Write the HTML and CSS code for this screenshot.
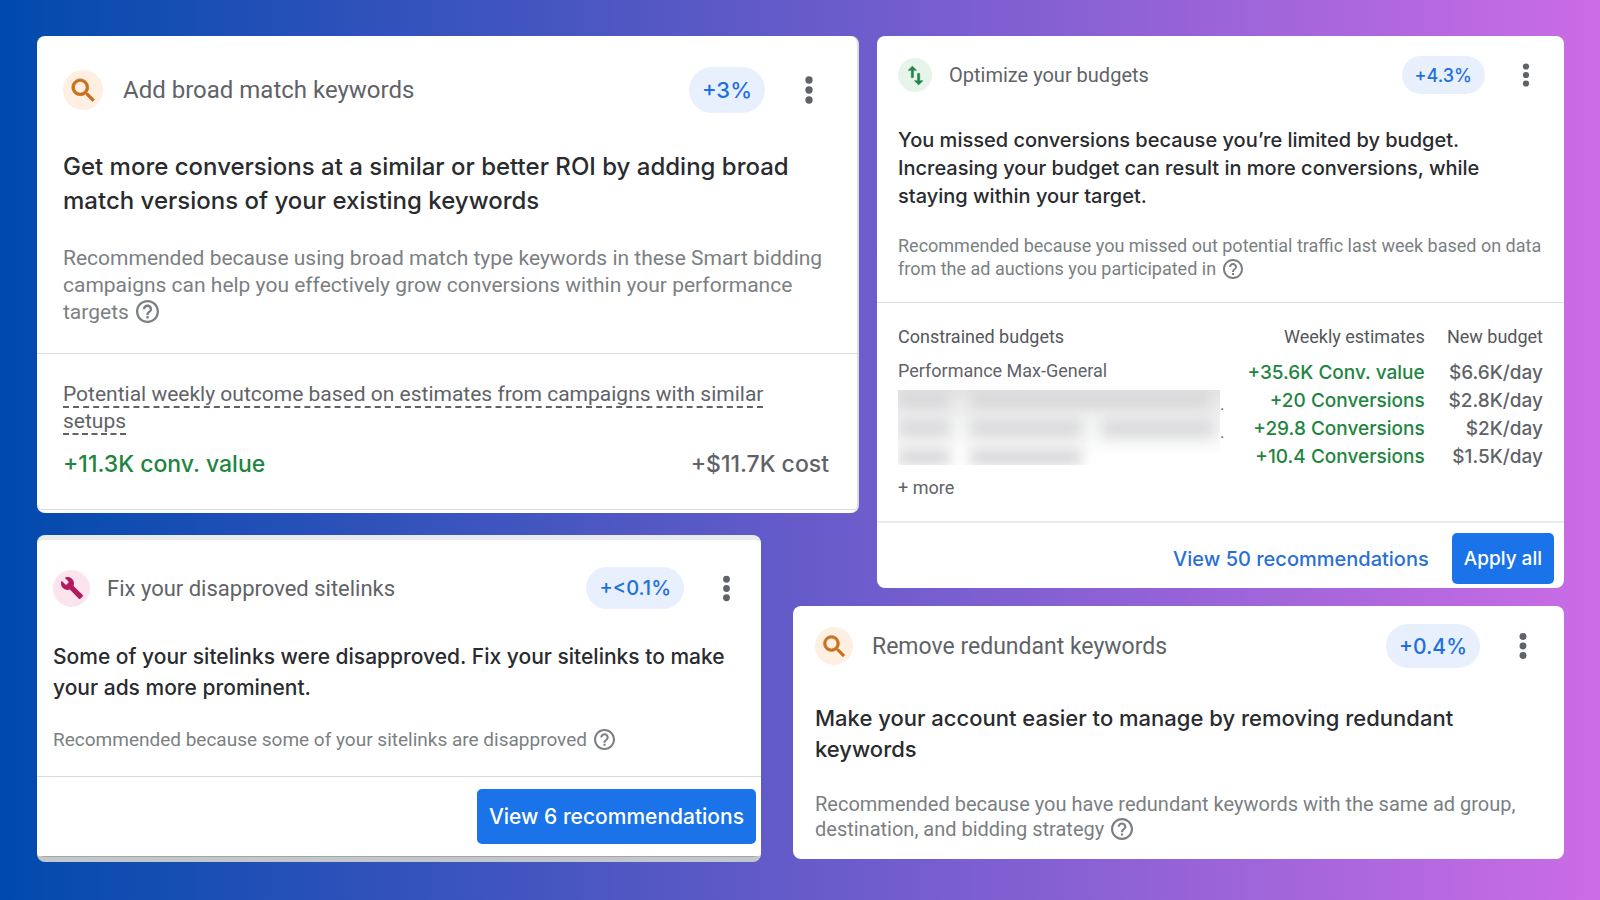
FILE: index.html
```html
<!DOCTYPE html>
<html lang="en">
<head>
    <meta charset="UTF-8">
    <meta name="viewport" content="width=device-width, initial-scale=1.0">
    <title>Recommendations</title>
    <link rel="stylesheet" href="styles.css">
</head>
<body>
    <svg class="sprite" aria-hidden="true">
        <symbol id="icon-search" viewBox="0 0 24 24"><path d="M15.5 14h-.79l-.28-.27C15.41 12.59 16 11.11 16 9.5 16 5.91 13.09 3 9.5 3S3 5.91 3 9.5 5.91 16 9.5 16c1.61 0 3.09-.59 4.23-1.57l.27.28v.79l5 4.99L20.49 19l-4.99-5zm-6 0C7.01 14 5 11.99 5 9.5S7.01 5 9.5 5 14 7.01 14 9.5 11.99 14 9.5 14z"/></symbol>
        <symbol id="icon-wrench" viewBox="0 0 24 24"><path d="M22.7 19l-9.1-9.1c.9-2.3.4-5-1.5-6.9-2-2-5-2.4-7.4-1.3L9 6 6 9 1.6 4.7C.4 7.1.9 10.1 2.9 12.1c1.9 1.9 4.6 2.4 6.9 1.5l9.1 9.1c.4.4 1 .4 1.4 0l2.3-2.3c.5-.4.5-1.1.1-1.4z"/></symbol>
        <symbol id="icon-swap" viewBox="0 0 24 24"><path d="M16 17.01V10h-2v7.01h-3L15 21l4-3.99h-3zM9 3L5 6.99h3V14h2V6.99h3L9 3z"/></symbol>
        <symbol id="icon-help" viewBox="2 2 20 20"><path d="M11 18h2v-2h-2v2zm1-16C6.48 2 2 6.48 2 12s4.48 10 10 10 10-4.48 10-10S17.52 2 12 2zm0 18c-4.41 0-8-3.59-8-8s3.59-8 8-8 8 3.59 8 8-3.59 8-8 8zm0-14c-2.21 0-4 1.79-4 4h2c0-1.1.9-2 2-2s2 .9 2 2c0 2-3 1.75-3 5h2c0-2.25 3-2.5 3-5 0-2.21-1.79-4-4-4z"/></symbol>
        <symbol id="icon-more" viewBox="0 0 24 24"><circle cx="12" cy="6" r="2.2"/><circle cx="12" cy="12" r="2.2"/><circle cx="12" cy="18" r="2.2"/></symbol>
    </svg>

    <main class="board">
        <div class="column column-left">
            <section class="card card-broad">
                <div class="card-body">
                    <header class="card-head">
                        <span class="badge badge-orange"><svg><use href="#icon-search"/></svg></span>
                        <h2>Add broad match keywords</h2>
                        <span class="pill">+3%</span>
                        <button class="more" aria-label="More options"><svg><use href="#icon-more"/></svg></button>
                    </header>
                    <h3>Get more conversions at a similar or better ROI by adding broad<br>match versions of your existing keywords</h3>
                    <p class="reason">Recommended because using broad match type keywords in these Smart bidding<br>campaigns can help you effectively grow conversions within your performance<br>targets <svg class="help"><use href="#icon-help"/></svg></p>
                </div>
                <div class="outcome">
                    <p class="outcome-label"><span>Potential weekly outcome based on estimates from campaigns with similar</span><br><span>setups</span></p>
                    <div class="outcome-values">
                        <span class="gain">+11.3K conv. value</span>
                        <span class="cost">+$11.7K cost</span>
                    </div>
                </div>
            </section>

            <section class="card card-sitelinks">
                <div class="card-body">
                    <header class="card-head">
                        <span class="badge badge-pink"><svg><use href="#icon-wrench"/></svg></span>
                        <h2>Fix your disapproved sitelinks</h2>
                        <span class="pill">+&lt;0.1%</span>
                        <button class="more" aria-label="More options"><svg><use href="#icon-more"/></svg></button>
                    </header>
                    <h3>Some of your sitelinks were disapproved. Fix your sitelinks to make<br>your ads more prominent.</h3>
                    <p class="reason">Recommended because some of your sitelinks are disapproved <svg class="help"><use href="#icon-help"/></svg></p>
                </div>
                <footer class="card-foot">
                    <button class="primary">View 6 recommendations</button>
                </footer>
            </section>
        </div>

        <div class="column column-right">
            <section class="card card-budgets">
                <div class="card-body">
                    <header class="card-head">
                        <span class="badge badge-green"><svg><use href="#icon-swap"/></svg></span>
                        <h2>Optimize your budgets</h2>
                        <span class="pill">+4.3%</span>
                        <button class="more" aria-label="More options"><svg><use href="#icon-more"/></svg></button>
                    </header>
                    <h3>You missed conversions because you’re limited by budget.<br>Increasing your budget can result in more conversions, while<br>staying within your target.</h3>
                    <p class="reason">Recommended because you missed out potential traffic last week based on data<br>from the ad auctions you participated in <svg class="help"><use href="#icon-help"/></svg></p>
                </div>
                <div class="budgets">
                    <table>
                        <thead>
                            <tr><th>Constrained budgets</th><th>Weekly estimates</th><th>New budget</th></tr>
                        </thead>
                        <tbody>
                            <tr>
                                <td class="name">Performance Max-General</td>
                                <td class="gain">+35.6K Conv. value</td>
                                <td>$6.6K/day</td>
                            </tr>
                            <tr>
                                <td rowspan="3" class="hidden-names">
                                    <div class="redacted">
                                        <div class="smudges">
                                            <div class="smudge-row"><i class="short"></i><i class="long"></i></div>
                                            <div class="smudge-row"><i class="short"></i><i></i><i></i></div>
                                            <div class="smudge-row"><i class="short"></i><i></i></div>
                                        </div>
                                        <div class="dots"><span>.</span><span>.</span></div>
                                    </div>
                                </td>
                                <td class="gain">+20 Conversions</td>
                                <td>$2.8K/day</td>
                            </tr>
                            <tr><td class="gain">+29.8 Conversions</td><td>$2K/day</td></tr>
                            <tr><td class="gain">+10.4 Conversions</td><td>$1.5K/day</td></tr>
                        </tbody>
                    </table>
                    <p class="more-rows">+ more</p>
                </div>
                <footer class="card-foot">
                    <a href="#" class="view-link">View 50 recommendations</a>
                    <button class="primary">Apply all</button>
                </footer>
            </section>

            <section class="card card-redundant">
                <div class="card-body">
                    <header class="card-head">
                        <span class="badge badge-orange"><svg><use href="#icon-search"/></svg></span>
                        <h2>Remove redundant keywords</h2>
                        <span class="pill">+0.4%</span>
                        <button class="more" aria-label="More options"><svg><use href="#icon-more"/></svg></button>
                    </header>
                    <h3>Make your account easier to manage by removing redundant<br>keywords</h3>
                    <p class="reason">Recommended because you have redundant keywords with the same ad group,<br>destination, and bidding strategy <svg class="help"><use href="#icon-help"/></svg></p>
                </div>
            </section>
        </div>
    </main>
</body>
</html>
```
FILE: styles.css
```css
* {
    box-sizing: border-box;
}

body {
    margin: 0;
    min-height: 100vh;
    font-family: Roboto, "Liberation Sans", sans-serif;
    color: #5f6368;
    background: linear-gradient(90deg, #004aad, #cb6ce6);
}

h2, h3, p {
    margin: 0;
    font-weight: 400;
}

button {
    border: none;
    padding: 0;
    cursor: pointer;
    font-family: inherit;
}

svg {
    display: block;
    fill: currentColor;
}

.sprite {
    display: none;
}

.board {
    display: grid;
    grid-template-columns: 822fr 687fr;
    gap: 18px;
    padding: 36px 36px 38px 37px;
}

.column {
    display: flex;
    flex-direction: column;
    min-width: 0;
}

.column-left {
    gap: 22px;
}

.column-right {
    gap: 18px;
}

/* cards share one structure, each one sets its own scale */
.card {
    background: #fff;
    border-radius: 8px;
    overflow: hidden;
    white-space: nowrap;
}

.card-broad {
    --side: 26px;
    --badge: 40px;
    --icon: 31px;
    --pill: 46px;
    --gap: 20px;
    --title: 24px;
    --heading: 24px;
    --heading-line: 34px;
    --label: 22px;
    --text: 21px;
    --text-line: 27px;
    --help: 23px;
    border-right: 2px solid #dadce0;
}

.card-sitelinks {
    --side: 16px;
    --badge: 37px;
    --icon: 24px;
    --pill: 42px;
    --gap: 17px;
    --title: 22px;
    --heading: 21px;
    --heading-line: 31px;
    --label: 20px;
    --text: 19px;
    --text-line: 25px;
    --help: 21px;
    margin-right: 98px;
    border-top: 5px solid #e8eaeb;
    border-bottom: 5px solid #c4c7c9;
}

.card-budgets {
    --side: 21px;
    --badge: 34px;
    --icon: 25px;
    --pill: 38px;
    --gap: 17px;
    --title: 20px;
    --heading: 20px;
    --heading-line: 28px;
    --label: 18px;
    --text: 18px;
    --text-line: 23px;
    --help: 20px;
}

.card-redundant {
    --side: 22px;
    --badge: 38px;
    --icon: 29px;
    --pill: 44px;
    --gap: 19px;
    --title: 23px;
    --heading: 22px;
    --heading-line: 31px;
    --label: 21px;
    --text: 20px;
    --text-line: 25px;
    --help: 22px;
    margin-left: -84px;
}

.card-body {
    padding: 0 var(--side);
}

.card-broad .card-body {
    padding-top: 31px;
    padding-right: 28px;
    padding-bottom: 27px;
}

.card-sitelinks .card-body {
    padding-top: 27px;
    padding-bottom: 24px;
}

.card-budgets .card-body {
    padding-top: 20px;
    padding-bottom: 22px;
}

.card-redundant .card-body {
    padding-top: 18px;
    padding-bottom: 17px;
}

.card-head {
    display: flex;
    align-items: center;
    height: var(--pill);
}

.card-head h2 {
    flex: 1;
    margin-left: var(--gap);
    font-size: var(--title);
}

.badge {
    display: flex;
    align-items: center;
    justify-content: center;
    width: var(--badge);
    height: var(--badge);
    border-radius: 50%;
}

.badge svg {
    width: var(--icon);
    height: var(--icon);
    stroke: currentColor;
    stroke-width: 0.6px;
}

.badge-orange {
    background: #feefe3;
    color: #c9701a;
}

.badge-pink {
    background: #fce4ee;
    color: #b3195e;
}

.badge-pink svg {
    stroke: none;
}

.badge-green {
    background: #e6f4ea;
    color: #23844a;
}

.pill {
    display: flex;
    align-items: center;
    height: var(--pill);
    padding: 0 13px;
    border-radius: 23px;
    background: #e8f0fe;
    color: #1f6fdc;
    font-family: Inter, Roboto, sans-serif;
    font-size: var(--label);
    font-weight: 500;
}

.more {
    margin-left: 24px;
    background: none;
    color: #5f6368;
}

.more svg {
    width: var(--badge);
    height: var(--badge);
}

h3 {
    margin-top: 32px;
    font-family: Inter, Roboto, sans-serif;
    font-size: var(--heading);
    font-weight: 500;
    line-height: var(--heading-line);
    color: #292b2e;
}

.card-broad h3 {
    margin-top: 37px;
}

.card-redundant h3 {
    margin-top: 35px;
}

.reason {
    margin-top: 24px;
    font-size: var(--text);
    line-height: var(--text-line);
    color: #7b7f83;
}

.card-broad .reason, .card-redundant .reason {
    margin-top: 27px;
}

.help {
    display: inline-block;
    width: var(--help);
    height: var(--help);
    margin-top: -3px;
    margin-left: 2px;
    vertical-align: middle;
}

.gain, .cost {
    font-family: Inter, Roboto, sans-serif;
    font-weight: 500;
}

.gain {
    color: #1e8541;
}

.outcome {
    margin-bottom: 3px;
    padding: 27px 28px 28px 26px;
    border-top: 1px solid #dadce0;
    border-bottom: 1px solid #dadce0;
}

.outcome-label {
    font-size: var(--text);
    line-height: var(--text-line);
}

.outcome-label span {
    border-bottom: 2px dashed #5f6368;
}

.outcome-values {
    display: flex;
    justify-content: space-between;
    margin-top: 12px;
    font-size: 23px;
    line-height: 34px;
}

.card-foot {
    display: flex;
    align-items: center;
    justify-content: flex-end;
    gap: 23px;
    padding: 12px 5px 12px 16px;
    border-top: 1px solid #dadce0;
}

.card-sitelinks .card-foot {
    border-bottom: 1px solid #a2a4a6;
}

.card-budgets .card-foot {
    padding: 10px 10px 4px 22px;
    border-top: 2px solid #e8eaeb;
}

.primary {
    height: 55px;
    padding: 0 12px;
    border-radius: 5px;
    background: #1a73e8;
    color: #fff;
    font-family: Inter, Roboto, sans-serif;
    font-size: 21px;
    font-weight: 500;
}

.card-budgets .primary {
    height: 51px;
    font-size: 19px;
}

.view-link {
    color: #2a6fd6;
    font-family: Inter, Roboto, sans-serif;
    font-size: 20px;
    font-weight: 500;
    text-decoration: none;
}

.budgets {
    padding: 22px 21px 21px;
    border-top: 1px solid #dadce0;
}

table {
    width: 100%;
    border-collapse: collapse;
}

th, td {
    padding: 0 0 0 22px;
    text-align: right;
}

th {
    padding-bottom: 10px;
    font-size: 18px;
    font-weight: 400;
    line-height: 24px;
    color: #54575b;
}

td {
    font-family: Inter, Roboto, sans-serif;
    font-size: 19px;
    font-weight: 500;
    line-height: 28px;
}

th:first-child, .name, .hidden-names {
    padding-left: 0;
    text-align: left;
}

.name, .more-rows {
    font-family: inherit;
    font-size: 18px;
    font-weight: 400;
    line-height: 24px;
}

.name {
    vertical-align: top;
}

.more-rows {
    margin-top: 5px;
}

.hidden-names {
    vertical-align: top;
}

.redacted {
    display: flex;
    padding-top: 3px;
}

/* names hidden behind a blur */
.smudges {
    width: 322px;
    height: 75px;
    overflow: hidden;
    background: linear-gradient(#e4e4e5, #f3f4f4 40%, #fff 90%);
}

.smudge-row {
    display: flex;
    gap: 20px;
    height: 29px;
    filter: blur(7px);
}

.smudge-row i {
    width: 112px;
    height: 18px;
    background: #d8d8da;
}

.smudge-row .short {
    width: 52px;
}

.smudge-row .long {
    width: 240px;
}

.dots {
    display: flex;
    flex-direction: column;
    font: 400 17px Roboto, sans-serif;
    line-height: 28px;
}
```
